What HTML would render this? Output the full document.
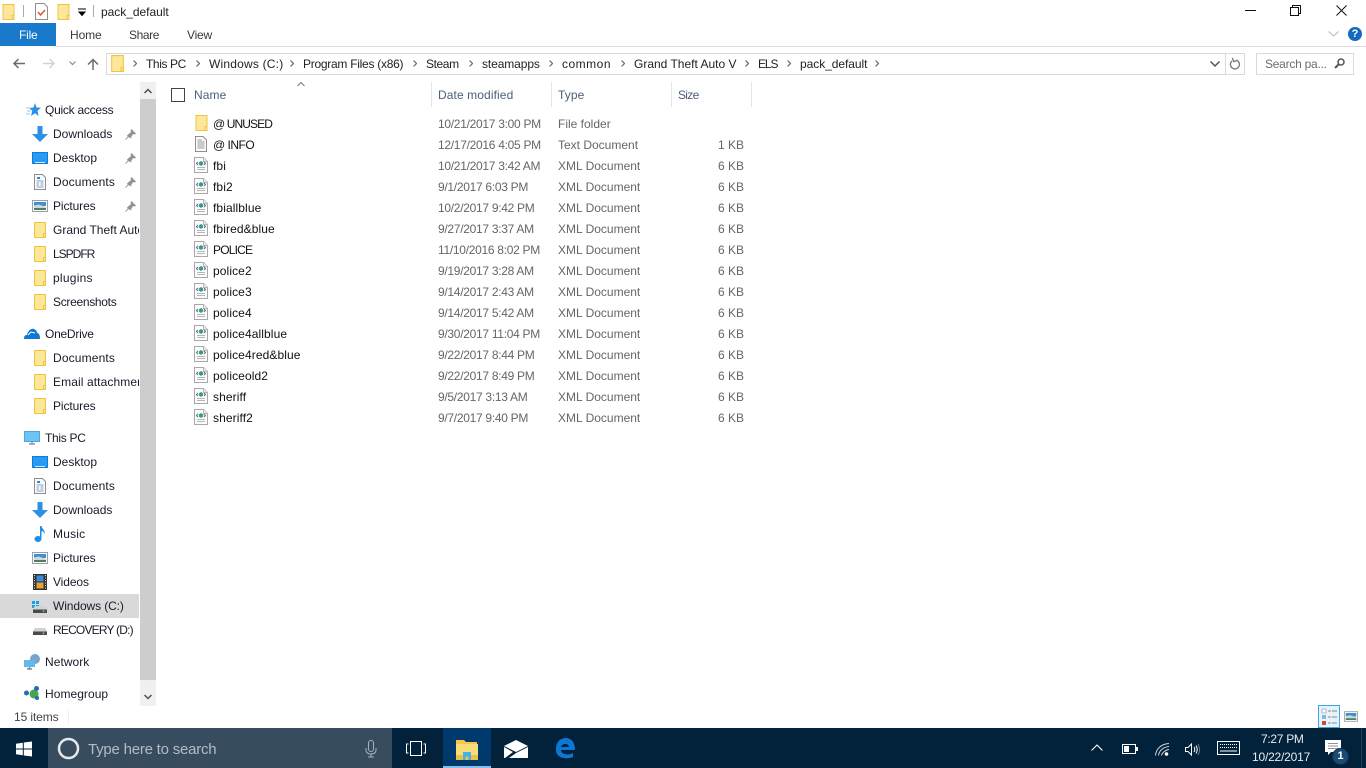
<!DOCTYPE html>
<html lang="en"><head><meta charset="utf-8"><title>pack_default</title>
<style>
html,body{margin:0;padding:0;background:#fff;width:1366px;height:768px;overflow:hidden}
body{position:relative;font-family:"Liberation Sans",sans-serif;font-size:12px;color:#1a1a1a}
.t{position:absolute;white-space:nowrap;line-height:16px;font-size:12px}
.n{color:#1a1a2a}
.h{color:#4c607a;letter-spacing:.1px}
.r{letter-spacing:.1px;color:#111;margin-top:1px}
.d{color:#666;margin-top:1px}
.dt{letter-spacing:-.29px}
.s{position:absolute;display:block;overflow:visible}
.b{position:absolute}
.a{color:#222;top:56px}
</style></head><body>
<svg width="0" height="0" style="position:absolute">
<defs>
<symbol id="folder" viewBox="0 0 12 16"><path d="M.5.5H11.5V15.500H.5Z" fill="#fee79a" stroke="#eec543"/><path d="M9.500 11.500H11.500V15.500H9.500Z" fill="#fee79a" stroke="#eec543"/></symbol>
<symbol id="xml" viewBox="0 0 14 16"><path d="M.5.5H9.500L13.500 4.500V15.500H.5Z" fill="#fcfcfc" stroke="#a8a8a8"/><path d="M9.500.5V4.500H13.500" fill="#eee" stroke="#b5b5b5"/><circle cx="7" cy="6.500" r="2.200" fill="#2c9c93"/><path d="M4 5 2.500 6.500 4 8M10 5 11.500 6.500 10 8" fill="none" stroke="#666"/><path d="M3 10.500H11M3 12.500H11" stroke="#b5b5b5"/></symbol>
<symbol id="txt" viewBox="0 0 12 16"><path d="M.5.500H8L11.500 4V15.500H.5Z" fill="#fafafa" stroke="#8f8f8f"/><path d="M2.500 4H7M2.500 6H9.500M2.500 8H9.500M2.500 10H9.500M2.500 12H9.500" stroke="#9a9a9a"/></symbol>
<symbol id="desk" viewBox="0 0 16 12"><rect width="16" height="12" fill="#0a7fdc"/><rect x="1" y="1" width="14" height="9.500" fill="#2b9bf0"/><path d="M3 10.500H13" stroke="#cfe8fb"/></symbol>
<symbol id="doc" viewBox="0 0 12 16"><path d="M.5.500H8.500L11.500 3.500V15.500H.5Z" fill="#fbfbfb" stroke="#8d8d8d"/><path d="M3 4H6" stroke="#2b88d8" stroke-width="2"/><path d="M2.500 7H9.500M2.500 9H5M6.500 9H9.500M2.500 11H5M6.500 11H9.500M2.500 13H9.500" stroke="#7ea6c6"/></symbol>
<symbol id="pic" viewBox="0 0 16 12"><rect x=".5" y=".5" width="15" height="11" fill="#fff" stroke="#9d9d9d"/><rect x="2" y="2" width="12" height="4" fill="#3e8fd8"/><path d="M2 5.500 7 4.500 14 7V10H2Z" fill="#cdd9d2"/><path d="M2 8H14V10H2Z" fill="#4f7f68"/></symbol>
<symbol id="down" viewBox="0 0 16 16"><path d="M5.500 0H10.500V8H16L8 16 0 8H5.500Z" fill="#2f8fe4"/></symbol>
<symbol id="pin" viewBox="0 0 12 12"><path d="M7 0 12 5 10.500 6 9 5.500 7 8 7 10 5 9.500 2 7.500 4 5.500 6.500 3.500 6 1.500Z" fill="#8d9298"/><path d="M3.500 8.500 .5 11.500" stroke="#8d9298"/></symbol>
<symbol id="drive" viewBox="0 0 16 8"><path d="M2 0H14L16 4V8H0V4Z" fill="#d2d2d2"/><rect y="4" width="16" height="4" fill="#4a4a4a"/><rect x="11" y="5" width="2" height="2" fill="#4fd24f"/></symbol>
<symbol id="chev" viewBox="0 0 4 7"><path d="M.5.500 3.500 3.500.5 6.500" fill="none" stroke="#666" stroke-width="1.200"/></symbol>
</defs>
</svg>

<!-- title bar -->
<svg class="s" style="left:2px;top:4px" width="13" height="16"><use href="#folder" width="13" height="16"/></svg>
<div class="b" style="left:23px;top:5px;width:1px;height:12px;background:#aaa"></div>
<svg class="s" style="left:35px;top:3px" width="13" height="17" viewBox="0 0 13 17"><path d="M.5.500H9L12.500 4V16.500H.5Z" fill="#fff" stroke="#8f8f8f"/><path d="M3 9 5.500 12 10 7" fill="none" stroke="#e4572e" stroke-width="1.500"/></svg>
<svg class="s" style="left:57px;top:4px" width="13" height="16"><use href="#folder" width="13" height="16"/></svg>
<svg class="s" style="left:78px;top:9px" width="8" height="7"><path d="M0 0H8M1 3H7L4 6.500Z" fill="#000" stroke="#000"/></svg>
<div class="b" style="left:93px;top:5px;width:1px;height:12px;background:#aaa"></div>
<div class="t" style="left:101px;top:4px;letter-spacing:-.03px;color:#222">pack_default</div>

<svg class="s" style="left:1245px;top:10px" width="11" height="1"><rect width="11" height="1" fill="#111"/></svg>
<svg class="s" style="left:1290px;top:5px" width="11" height="11"><path d="M2.500 2.500V.5H10.500V8.500H8.500M.5 2.500H8.500V10.500H.5Z" fill="none" stroke="#111"/></svg>
<svg class="s" style="left:1336px;top:5px" width="11" height="11"><path d="M.5.500 10.500 10.500M10.500.5 .5 10.500" stroke="#111" stroke-width="1"/></svg>

<!-- ribbon tabs -->
<div class="b" style="left:0;top:23px;width:56px;height:23px;background:#1979ca"></div>
<div class="t" style="left:19px;top:27px;color:#fff;letter-spacing:-.2px">File</div>
<div class="t" style="left:70px;top:27px;color:#3a3a3a;letter-spacing:-.1px">Home</div>
<div class="t" style="left:129px;top:27px;color:#3a3a3a;letter-spacing:-.4px">Share</div>
<div class="t" style="left:187px;top:27px;color:#3a3a3a;letter-spacing:-.2px">View</div>
<div class="b" style="left:56px;top:46px;width:1310px;height:1px;background:#dcdcdc"></div>
<svg class="s" style="left:1328px;top:31px" width="11" height="6"><path d="M.5.500 5.500 5 10.500.5" fill="none" stroke="#b5b5b5"/></svg>
<svg class="s" style="left:1348px;top:27px" width="14" height="14"><circle cx="7" cy="7" r="7" fill="#1469c0"/></svg>
<div class="t" style="left:1348px;top:27px;width:14px;text-align:center;color:#fff;font-weight:bold;font-size:11px;line-height:14px">?</div>

<!-- nav buttons -->
<svg class="s" style="left:13px;top:58px" width="12" height="11"><path d="M12 5.500H1.500M5.500 1 1 5.500 5.500 10" fill="none" stroke="#6b6b6b" stroke-width="1.500"/></svg>
<svg class="s" style="left:43px;top:58px" width="12" height="11"><path d="M0 5.500H10.500M6.500 1 11 5.500 6.500 10" fill="none" stroke="#d2d2d2" stroke-width="1.500"/></svg>
<svg class="s" style="left:69px;top:61px" width="7" height="5"><path d="M.5.500 3.500 3.500 6.500.5" fill="none" stroke="#8d8d8d" stroke-width="1.200"/></svg>
<svg class="s" style="left:87px;top:58px" width="12" height="12"><path d="M6 12V1.500M1 6.500 6 1.500 11 6.500" fill="none" stroke="#6b6b6b" stroke-width="1.500"/></svg>

<!-- address bar -->
<div class="b" style="left:106px;top:53px;width:1137px;height:20px;border:1px solid #d9d9d9"></div>
<div class="b" style="left:1225px;top:54px;width:1px;height:20px;background:#d9d9d9"></div>
<svg class="s" style="left:111px;top:55px" width="13" height="17"><use href="#folder" width="13" height="17"/></svg>
<svg class="s" style="left:133px;top:60px" width="4" height="7"><use href="#chev" width="4" height="7"/></svg>
<div class="t a" style="left:146px;letter-spacing:-.4px">This PC</div>
<svg class="s" style="left:196px;top:60px" width="4" height="7"><use href="#chev" width="4" height="7"/></svg>
<div class="t a" style="left:209px;letter-spacing:.2px">Windows (C:)</div>
<svg class="s" style="left:290px;top:60px" width="4" height="7"><use href="#chev" width="4" height="7"/></svg>
<div class="t a" style="left:303px;letter-spacing:-.27px">Program Files (x86)</div>
<svg class="s" style="left:413px;top:60px" width="4" height="7"><use href="#chev" width="4" height="7"/></svg>
<div class="t a" style="left:426px;letter-spacing:-.4px">Steam</div>
<svg class="s" style="left:469px;top:60px" width="4" height="7"><use href="#chev" width="4" height="7"/></svg>
<div class="t a" style="left:482px;letter-spacing:-.1px">steamapps</div>
<svg class="s" style="left:549px;top:60px" width="4" height="7"><use href="#chev" width="4" height="7"/></svg>
<div class="t a" style="left:562px;letter-spacing:.5px">common</div>
<svg class="s" style="left:621px;top:60px" width="4" height="7"><use href="#chev" width="4" height="7"/></svg>
<div class="t a" style="left:634px">Grand Theft Auto V</div>
<svg class="s" style="left:745px;top:60px" width="4" height="7"><use href="#chev" width="4" height="7"/></svg>
<div class="t a" style="left:758px;letter-spacing:-1.100px">ELS</div>
<svg class="s" style="left:787px;top:60px" width="4" height="7"><use href="#chev" width="4" height="7"/></svg>
<div class="t a" style="left:800px;letter-spacing:-.05px">pack_default</div>
<svg class="s" style="left:875px;top:60px" width="4" height="7"><use href="#chev" width="4" height="7"/></svg>
<svg class="s" style="left:1210px;top:61px" width="10" height="6"><path d="M.5.500 5 5 9.500.5" fill="none" stroke="#555" stroke-width="1.500"/></svg>
<svg class="s" style="left:1229px;top:57px" width="11" height="13" viewBox="0 0 11 13"><path d="M3 4A4.500 4.500 0 1 0 7.500 3.200" fill="none" stroke="#777" stroke-width="1.300"/><path d="M4.500 .5V4.500H8.500" fill="none" stroke="#777" stroke-width="1.300" transform="rotate(-20 5 4)"/></svg>
<div class="b" style="left:1256px;top:53px;width:96px;height:20px;border:1px solid #d9d9d9"></div>
<div class="t" style="left:1265px;top:56px;color:#6d6d6d;letter-spacing:-.25px">Search pa...</div>
<svg class="s" style="left:1334px;top:58px" width="11" height="11"><circle cx="7" cy="4" r="3" fill="none" stroke="#555" stroke-width="1.500"/><path d="M5 6 1 10" stroke="#555" stroke-width="2"/></svg>

<!-- nav scrollbar -->
<div class="b" style="left:140px;top:82px;width:16px;height:624px;background:#f0f0f0"></div>
<div class="b" style="left:140px;top:99px;width:16px;height:581px;background:#cdcdcd"></div>
<svg class="s" style="left:144px;top:88px" width="8" height="6"><path d="M.5 5 4 1.500 7.500 5" fill="none" stroke="#505050" stroke-width="1.500"/></svg>
<svg class="s" style="left:144px;top:694px" width="8" height="6"><path d="M.5 1 4 4.500 7.500 1" fill="none" stroke="#505050" stroke-width="1.500"/></svg>

<!-- nav pane -->
<svg class="s" style="left:26px;top:103px" width="15" height="14" viewBox="0 0 15 14"><path d="M9 0 10.500 4.500 15 4.800 11.500 7.800 12.700 13 9 10.200 5 13 6.300 7.800 3 5 7.500 4.500Z" fill="#2b8fe6"/><path d="M0 5H4M1 8H5M0 11H4" stroke="#9ccbf0"/></svg>
<div class="t n" style="left:45px;top:102px;letter-spacing:-.25px">Quick access</div>

<svg class="s" style="left:32px;top:126px" width="16" height="16"><use href="#down" width="16" height="16"/></svg>
<div class="t n" style="left:53px;top:126px">Downloads</div>
<svg class="s" style="left:125px;top:129px" width="11" height="11"><use href="#pin" width="11" height="11"/></svg>

<svg class="s" style="left:32px;top:152px" width="16" height="12"><use href="#desk" width="16" height="12"/></svg>
<div class="t n" style="left:53px;top:150px">Desktop</div>
<svg class="s" style="left:125px;top:153px" width="11" height="11"><use href="#pin" width="11" height="11"/></svg>

<svg class="s" style="left:34px;top:174px" width="12" height="16"><use href="#doc" width="12" height="16"/></svg>
<div class="t n" style="left:53px;top:174px;letter-spacing:.15px">Documents</div>
<svg class="s" style="left:125px;top:177px" width="11" height="11"><use href="#pin" width="11" height="11"/></svg>

<svg class="s" style="left:32px;top:200px" width="16" height="12"><use href="#pic" width="16" height="12"/></svg>
<div class="t n" style="left:53px;top:198px;letter-spacing:-.1px">Pictures</div>
<svg class="s" style="left:125px;top:201px" width="11" height="11"><use href="#pin" width="11" height="11"/></svg>

<svg class="s" style="left:34px;top:222px" width="12" height="16"><use href="#folder" width="12" height="16"/></svg>
<div class="t n" style="left:53px;top:222px;width:86px;overflow:hidden">Grand Theft Auto V</div>
<svg class="s" style="left:34px;top:246px" width="12" height="16"><use href="#folder" width="12" height="16"/></svg>
<div class="t n" style="left:53px;top:246px;letter-spacing:-1px">LSPDFR</div>
<svg class="s" style="left:34px;top:270px" width="12" height="16"><use href="#folder" width="12" height="16"/></svg>
<div class="t n" style="left:53px;top:270px;letter-spacing:.25px">plugins</div>
<svg class="s" style="left:34px;top:294px" width="12" height="16"><use href="#folder" width="12" height="16"/></svg>
<div class="t n" style="left:53px;top:294px;letter-spacing:-.3px">Screenshots</div>

<svg class="s" style="left:24px;top:328px" width="16" height="11" viewBox="0 0 16 11"><path d="M0 11C0 8 1 7 3 7 4 3 7 0 10 1 12 2 13 3 13 5 15 5 16 7 16 11Z" fill="#0f78d4"/><path d="M4 7 7 4 11 5" fill="none" stroke="#fff"/></svg>
<div class="t n" style="left:45px;top:326px;letter-spacing:-.25px">OneDrive</div>
<svg class="s" style="left:34px;top:350px" width="12" height="16"><use href="#folder" width="12" height="16"/></svg>
<div class="t n" style="left:53px;top:350px;letter-spacing:.15px">Documents</div>
<svg class="s" style="left:34px;top:374px" width="12" height="16"><use href="#folder" width="12" height="16"/></svg>
<div class="t n" style="left:53px;top:374px;width:86px;overflow:hidden;letter-spacing:.1px">Email attachments</div>
<svg class="s" style="left:34px;top:398px" width="12" height="16"><use href="#folder" width="12" height="16"/></svg>
<div class="t n" style="left:53px;top:398px;letter-spacing:-.1px">Pictures</div>

<svg class="s" style="left:24px;top:431px" width="16" height="14" viewBox="0 0 16 14"><rect x=".5" y=".5" width="15" height="10" fill="#6cc4f5" stroke="#4da6dc"/><path d="M5 13H11M8 11V13" stroke="#8a9aa6" stroke-width="1.500"/></svg>
<div class="t n" style="left:45px;top:430px;letter-spacing:-.3px">This PC</div>
<svg class="s" style="left:32px;top:456px" width="16" height="12"><use href="#desk" width="16" height="12"/></svg>
<div class="t n" style="left:53px;top:454px">Desktop</div>
<svg class="s" style="left:34px;top:478px" width="12" height="16"><use href="#doc" width="12" height="16"/></svg>
<div class="t n" style="left:53px;top:478px;letter-spacing:.15px">Documents</div>
<svg class="s" style="left:32px;top:502px" width="16" height="16"><use href="#down" width="16" height="16"/></svg>
<div class="t n" style="left:53px;top:502px">Downloads</div>
<svg class="s" style="left:34px;top:526px" width="12" height="16" viewBox="0 0 12 16"><path d="M6 0H7.500C8 3 11 4 11 8 10 6 9 5.500 7.500 5V13A3.500 3 0 1 1 6 10.500Z" fill="#1b8fe8"/></svg>
<div class="t n" style="left:53px;top:526px;letter-spacing:.2px">Music</div>
<svg class="s" style="left:32px;top:552px" width="16" height="12"><use href="#pic" width="16" height="12"/></svg>
<div class="t n" style="left:53px;top:550px;letter-spacing:-.1px">Pictures</div>
<svg class="s" style="left:33px;top:574px" width="14" height="16" viewBox="0 0 14 16"><rect width="14" height="16" fill="#333"/><path d="M1 1.500H2M1 4H2M1 6.500H2M1 9H2M1 11.500H2M1 14H2M12 1.500H13M12 4H13M12 6.500H13M12 9H13M12 11.500H13M12 14H13" stroke="#ddd"/><rect x="3.500" y="1.500" width="7" height="6" fill="#3a8bd8"/><rect x="3.500" y="8.500" width="7" height="6" fill="#e5a23a"/></svg>
<div class="t n" style="left:53px;top:574px;letter-spacing:-.1px">Videos</div>
<div class="b" style="left:0;top:594px;width:139px;height:24px;background:#d9d9d9"></div>
<svg class="s" style="left:32px;top:601px" width="7" height="7"><path d="M0 0H3V3H0ZM4 0H7V3H4ZM0 4H3V7H0ZM4 4H7V7H4Z" fill="#19a0e8"/></svg>
<svg class="s" style="left:33px;top:605px" width="14" height="9"><use href="#drive" width="14" height="9"/></svg>
<div class="t n" style="left:53px;top:598px;letter-spacing:-.1px">Windows (C:)</div>
<svg class="s" style="left:33px;top:627px" width="14" height="9"><use href="#drive" width="14" height="9"/></svg>
<div class="t n" style="left:53px;top:622px;letter-spacing:-.8px">RECOVERY (D:)</div>
<svg class="s" style="left:24px;top:654px" width="17" height="16" viewBox="0 0 17 16"><circle cx="11" cy="5" r="5" fill="#7aa3c8"/><rect x="0" y="6" width="11" height="7" fill="#5fb8ee"/><path d="M3 15H8M5.500 13V15" stroke="#7a8a96" stroke-width="1.500"/></svg>
<div class="t n" style="left:45px;top:654px;letter-spacing:.05px">Network</div>
<svg class="s" style="left:24px;top:686px" width="17" height="14" viewBox="0 0 17 14"><circle cx="2.500" cy="7" r="2.500" fill="#1d6fb8"/><circle cx="10" cy="8" r="4.500" fill="#4aa64a"/><circle cx="12.500" cy="2.500" r="2.500" fill="#1d6fb8"/><circle cx="13" cy="12" r="2" fill="#1d6fb8"/></svg>
<div class="t n" style="left:45px;top:686px;letter-spacing:.05px">Homegroup</div>

<!-- column headers -->
<div class="b" style="left:171px;top:88px;width:12px;height:12px;border:1px solid #444"></div>
<svg class="s" style="left:297px;top:82px" width="8" height="5"><path d="M.5 4 4 .5 7.500 4" fill="none" stroke="#777"/></svg>
<div class="t h" style="left:194px;top:87px">Name</div>
<div class="b" style="left:431px;top:82px;width:1px;height:25px;background:#e5e5e5"></div>
<div class="t h" style="left:438px;top:87px">Date modified</div>
<div class="b" style="left:551px;top:82px;width:1px;height:25px;background:#e5e5e5"></div>
<div class="t h" style="left:558px;top:87px">Type</div>
<div class="b" style="left:671px;top:82px;width:1px;height:25px;background:#e5e5e5"></div>
<div class="t h" style="left:678px;top:87px;letter-spacing:-.7px">Size</div>
<div class="b" style="left:751px;top:82px;width:1px;height:25px;background:#e5e5e5"></div>

<!-- rows -->
<svg class="s" style="left:195px;top:115px" width="13" height="16"><use href="#folder" width="13" height="16"/></svg>
<div class="t r" style="left:213px;top:115px;letter-spacing:-.9px">@ UNUSED</div><div class="t d dt" style="left:438px;top:115px">10/21/2017 3:00 PM</div><div class="t d" style="left:558px;top:115px">File folder</div>

<svg class="s" style="left:195px;top:136px" width="12" height="16"><use href="#txt" width="12" height="16"/></svg>
<div class="t r" style="left:213px;top:136px;letter-spacing:-.5px">@ INFO</div><div class="t d dt" style="left:438px;top:136px">12/17/2016 4:05 PM</div><div class="t d" style="left:558px;top:136px">Text Document</div><div class="t d" style="right:622px;top:136px">1 KB</div>

<svg class="s" style="left:194px;top:157px" width="14" height="16"><use href="#xml" width="14" height="16"/></svg>
<div class="t r" style="left:213px;top:157px">fbi</div><div class="t d dt" style="left:438px;top:157px">10/21/2017 3:42 AM</div><div class="t d" style="left:558px;top:157px">XML Document</div><div class="t d" style="right:622px;top:157px">6 KB</div>

<svg class="s" style="left:194px;top:178px" width="14" height="16"><use href="#xml" width="14" height="16"/></svg>
<div class="t r" style="left:213px;top:178px">fbi2</div><div class="t d dt" style="left:438px;top:178px">9/1/2017 6:03 PM</div><div class="t d" style="left:558px;top:178px">XML Document</div><div class="t d" style="right:622px;top:178px">6 KB</div>

<svg class="s" style="left:194px;top:199px" width="14" height="16"><use href="#xml" width="14" height="16"/></svg>
<div class="t r" style="left:213px;top:199px">fbiallblue</div><div class="t d dt" style="left:438px;top:199px">10/2/2017 9:42 PM</div><div class="t d" style="left:558px;top:199px">XML Document</div><div class="t d" style="right:622px;top:199px">6 KB</div>

<svg class="s" style="left:194px;top:220px" width="14" height="16"><use href="#xml" width="14" height="16"/></svg>
<div class="t r" style="left:213px;top:220px">fbired&amp;blue</div><div class="t d dt" style="left:438px;top:220px">9/27/2017 3:37 AM</div><div class="t d" style="left:558px;top:220px">XML Document</div><div class="t d" style="right:622px;top:220px">6 KB</div>

<svg class="s" style="left:194px;top:241px" width="14" height="16"><use href="#xml" width="14" height="16"/></svg>
<div class="t r" style="left:213px;top:241px;letter-spacing:-.8px">POLICE</div><div class="t d dt" style="left:438px;top:241px">11/10/2016 8:02 PM</div><div class="t d" style="left:558px;top:241px">XML Document</div><div class="t d" style="right:622px;top:241px">6 KB</div>

<svg class="s" style="left:194px;top:262px" width="14" height="16"><use href="#xml" width="14" height="16"/></svg>
<div class="t r" style="left:213px;top:262px">police2</div><div class="t d dt" style="left:438px;top:262px">9/19/2017 3:28 AM</div><div class="t d" style="left:558px;top:262px">XML Document</div><div class="t d" style="right:622px;top:262px">6 KB</div>

<svg class="s" style="left:194px;top:283px" width="14" height="16"><use href="#xml" width="14" height="16"/></svg>
<div class="t r" style="left:213px;top:283px">police3</div><div class="t d dt" style="left:438px;top:283px">9/14/2017 2:43 AM</div><div class="t d" style="left:558px;top:283px">XML Document</div><div class="t d" style="right:622px;top:283px">6 KB</div>

<svg class="s" style="left:194px;top:304px" width="14" height="16"><use href="#xml" width="14" height="16"/></svg>
<div class="t r" style="left:213px;top:304px">police4</div><div class="t d dt" style="left:438px;top:304px">9/14/2017 5:42 AM</div><div class="t d" style="left:558px;top:304px">XML Document</div><div class="t d" style="right:622px;top:304px">6 KB</div>

<svg class="s" style="left:194px;top:325px" width="14" height="16"><use href="#xml" width="14" height="16"/></svg>
<div class="t r" style="left:213px;top:325px">police4allblue</div><div class="t d dt" style="left:438px;top:325px">9/30/2017 11:04 PM</div><div class="t d" style="left:558px;top:325px">XML Document</div><div class="t d" style="right:622px;top:325px">6 KB</div>

<svg class="s" style="left:194px;top:346px" width="14" height="16"><use href="#xml" width="14" height="16"/></svg>
<div class="t r" style="left:213px;top:346px">police4red&amp;blue</div><div class="t d dt" style="left:438px;top:346px">9/22/2017 8:44 PM</div><div class="t d" style="left:558px;top:346px">XML Document</div><div class="t d" style="right:622px;top:346px">6 KB</div>

<svg class="s" style="left:194px;top:367px" width="14" height="16"><use href="#xml" width="14" height="16"/></svg>
<div class="t r" style="left:213px;top:367px">policeold2</div><div class="t d dt" style="left:438px;top:367px">9/22/2017 8:49 PM</div><div class="t d" style="left:558px;top:367px">XML Document</div><div class="t d" style="right:622px;top:367px">6 KB</div>

<svg class="s" style="left:194px;top:388px" width="14" height="16"><use href="#xml" width="14" height="16"/></svg>
<div class="t r" style="left:213px;top:388px">sheriff</div><div class="t d dt" style="left:438px;top:388px">9/5/2017 3:13 AM</div><div class="t d" style="left:558px;top:388px">XML Document</div><div class="t d" style="right:622px;top:388px">6 KB</div>

<svg class="s" style="left:194px;top:409px" width="14" height="16"><use href="#xml" width="14" height="16"/></svg>
<div class="t r" style="left:213px;top:409px">sheriff2</div><div class="t d dt" style="left:438px;top:409px">9/7/2017 9:40 PM</div><div class="t d" style="left:558px;top:409px">XML Document</div><div class="t d" style="right:622px;top:409px">6 KB</div>

<!-- status bar -->
<div class="t" style="left:14px;top:709px;color:#444;letter-spacing:-.1px">15 items</div>
<div class="b" style="left:68px;top:710px;width:1px;height:14px;background:#eee"></div>
<div class="b" style="left:1318px;top:705px;width:20px;height:21px;border:1px solid #3ea6dc;background:#e5f3fb"></div>
<svg class="s" style="left:1322px;top:709px" width="15" height="16" viewBox="0 0 15 16"><path d="M0 0H4V4H0Z" fill="#fff" stroke="#888" stroke-width=".6"/><path d="M0 6H4V10H0Z" fill="#7db8e8"/><path d="M0 12H4V16H0Z" fill="#d8453a"/><path d="M6 2H9M10 2H15M6 8H9M10 8H15M6 14H9M10 14H15" stroke="#888"/></svg>
<svg class="s" style="left:1344px;top:711px" width="14" height="11"><use href="#pic" width="14" height="11"/></svg>

<!-- taskbar -->
<div class="b" style="left:0;top:728px;width:1366px;height:40px;background:#02213b"></div>
<svg class="s" style="left:16px;top:741px" width="16" height="16" viewBox="0 0 16 15"><path d="M0 2.200 6.800 1.200V7H0ZM7.800 1 16 0V7H7.800ZM0 8H6.800V13.800L0 12.800ZM7.800 8H16V15L7.800 14Z" fill="#fff"/></svg>
<div class="b" style="left:48px;top:728px;width:344px;height:40px;background:#384c60"></div>
<svg class="s" style="left:57px;top:737px" width="23" height="23"><circle cx="11.500" cy="11.500" r="9.500" fill="none" stroke="#e6e9ec" stroke-width="2.500"/></svg>
<div class="t" style="left:88px;top:741px;color:#b3bcc5;font-size:15px;line-height:18px;letter-spacing:-.22px">Type here to search</div>
<svg class="s" style="left:365px;top:740px" width="12" height="18" viewBox="0 0 12 18"><rect x="3.500" y=".5" width="5" height="11" rx="2.500" fill="none" stroke="#a8b2bc"/><path d="M1 8V10C1 13 3 14 6 14 9 14 11 13 11 10V8M6 14V17M3 17H9" fill="none" stroke="#a8b2bc"/></svg>
<svg class="s" style="left:406px;top:741px" width="20" height="15" viewBox="0 0 20 15"><rect x="4.500" y=".5" width="11" height="14" fill="none" stroke="#fff"/><path d="M2.500 3H.5V12H2.500M17.500 3H19.500V12H17.500" fill="none" stroke="#fff"/></svg>
<div class="b" style="left:443px;top:728px;width:48px;height:40px;background:#003a6c"></div>
<div class="b" style="left:443px;top:766px;width:48px;height:2px;background:#85bfea"></div>
<svg class="s" style="left:456px;top:740px" width="22" height="20" viewBox="0 0 22 20"><path d="M0 0H8L10 2H21V5H0Z" fill="#f6c644"/><rect y="4" width="22" height="16" fill="#fbdc7a"/><path d="M0 15H22V20H0Z" fill="#f0c040"/><path d="M7 20V13H15V20H12.500V16.500H9.500V20Z" fill="#3fb4ea"/><rect x="7" y="12" width="8" height="3" fill="#3fb4ea"/></svg>
<svg class="s" style="left:504px;top:740px" width="24" height="18" viewBox="0 0 24 18"><path d="M0 6 12 0 24 6 12 12Z" fill="#fff"/><path d="M0 7 9 12 1 18H0ZM24 7V18H5L12 13Z" fill="#fff"/></svg>
<svg class="s" style="left:555px;top:738px" width="20" height="21" viewBox="0 0 20 21"><path d="M1 9C2 3 6 0 11 0 16 0 20 4 20 12H6C6 16 13 18 18 15V19C11 22 1 20 1 12 1 10 1 10 1 9ZM6 9H14C14 5 7 5 6 9Z" fill="#0b78d6"/></svg>

<svg class="s" style="left:1091px;top:744px" width="12" height="7"><path d="M.5 6.500 6 1 11.500 6.500" fill="none" stroke="#fff" stroke-width="1.100"/></svg>
<svg class="s" style="left:1122px;top:744px" width="16" height="10" viewBox="0 0 16 10"><rect x=".5" y=".5" width="13" height="9" fill="none" stroke="#fff"/><rect x="2" y="2" width="5" height="6" fill="#fff"/><rect x="14" y="3" width="2" height="4" fill="#fff"/></svg>
<svg class="s" style="left:1155px;top:743px" width="15" height="13" viewBox="0 0 15 13"><path d="M.5 12.500C1 6 6 1 14 .5M3.500 12.500C4 8 8 4 14 3.500M6.500 12.500C7 10 10 7 14 6.500" fill="none" stroke="#d0d6dc"/><circle cx="11.500" cy="11" r="1.800" fill="#fff"/></svg>
<svg class="s" style="left:1185px;top:743px" width="16" height="13" viewBox="0 0 16 13"><path d="M.5 4.500H3L6.500 1V12L3 8.500H.5Z" fill="none" stroke="#fff"/><path d="M9 4C10 5.500 10 7.500 9 9M11 2.500C12.500 5 12.500 8 11 10.500" fill="none" stroke="#fff"/><path d="M13 1C15 4.500 15 8.500 13 12" fill="none" stroke="#667a8c"/></svg>
<svg class="s" style="left:1217px;top:741px" width="23" height="14" viewBox="0 0 23 14"><rect x=".5" y=".5" width="22" height="13" fill="none" stroke="#fff"/><path d="M3 3.500H20M3 6.500H20" stroke="#fff" stroke-dasharray="1 1"/><path d="M3 10H20" stroke="#fff"/></svg>
<div class="t" style="left:1261px;top:731px;color:#e8ecef;letter-spacing:-.3px">7:27 PM</div>
<div class="t" style="left:1252px;top:749px;color:#e8ecef;letter-spacing:-.2px">10/22/2017</div>
<svg class="s" style="left:1325px;top:740px" width="18" height="16" viewBox="0 0 18 16"><path d="M0 0H16V12H6L3 15V12H0Z" fill="#fff"/><path d="M3 3.500H13M3 6H13M3 8.500H13" stroke="#8a949e"/></svg>
<svg class="s" style="left:1332px;top:748px" width="17" height="17"><circle cx="8.500" cy="8.500" r="8" fill="#1a4a75" stroke="#0d2f4d"/></svg>
<div class="t" style="left:1332px;top:748px;width:17px;text-align:center;color:#fff;font-size:11px;line-height:17px;font-weight:bold">1</div>
<div class="b" style="left:1361px;top:728px;width:1px;height:40px;background:#23405a"></div>
</body></html>
